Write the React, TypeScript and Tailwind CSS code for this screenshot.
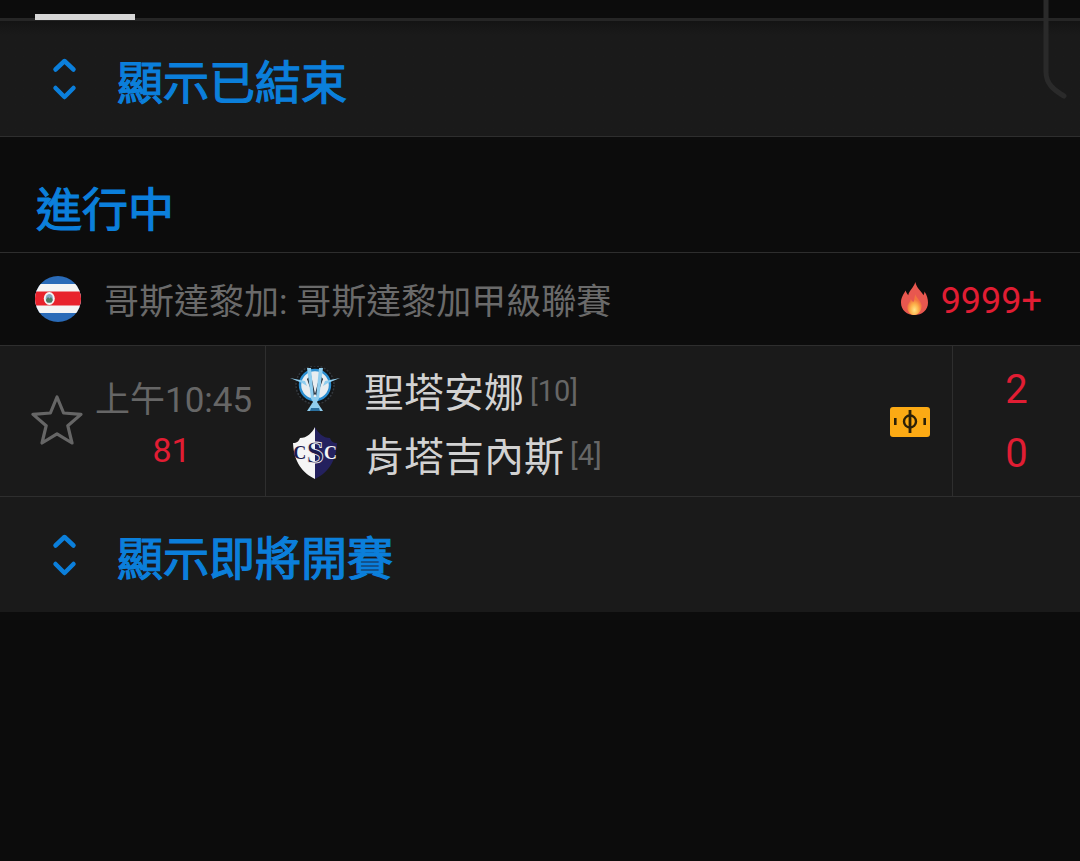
import React from "react";

const sans = "font-['Roboto','Noto_Sans_CJK_TC',sans-serif]";

function ToggleIcon() {
  return (
    <svg width="28" height="46" viewBox="0 0 28 46" fill="none" className="shrink-0">
      <path d="M4.5 13.5 L13.5 5 L22.5 13.5" stroke="#0b7fdb" strokeWidth="4.5" strokeLinecap="round" strokeLinejoin="round" />
      <path d="M4.5 32 L13.5 41 L22.5 32" stroke="#0b7fdb" strokeWidth="4.5" strokeLinecap="round" strokeLinejoin="round" />
    </svg>
  );
}

function ToggleRow({ label, shaded }: { label: string; shaded?: boolean }) {
  return (
    <div className={`flex h-[115px] items-center pl-[51px] ${shaded ? "bg-gradient-to-b from-[#141414] to-[#1a1a1a] to-[12%]" : "bg-[#1a1a1a]"}`}>
      <ToggleIcon />
      <span className="ml-[38px] pt-[8px] text-[46px] leading-none text-[#0b7fdb] [-webkit-text-stroke:1.2px_#0b7fdb]">{label}</span>
    </div>
  );
}

function Flag() {
  return (
    <svg width="46" height="46" viewBox="0 0 46 46" className="shrink-0">
      <defs>
        <clipPath id="flag-clip">
          <circle cx="23" cy="23" r="23" />
        </clipPath>
      </defs>
      <g clipPath="url(#flag-clip)">
        <rect width="46" height="46" fill="#2a6bb8" />
        <rect y="8" width="46" height="29" fill="#f4f4f4" />
        <rect y="15.5" width="46" height="14" fill="#e8222c" />
      </g>
      <ellipse cx="14.3" cy="22.5" rx="5.5" ry="6.5" fill="#f4f4f4" />
      <ellipse cx="14.3" cy="22.5" rx="3.6" ry="4.6" fill="#86a9c4" />
      <path d="M10.8 24 L13 21 L14.5 22.5 L16 21 L17.8 24 L16.6 26.5 L12 26.5 Z" fill="#4d7a62" />
    </svg>
  );
}

function Flame() {
  return (
    <svg width="27" height="34" viewBox="0 0 30 36" preserveAspectRatio="none" className="shrink-0">
      <defs>
        <radialGradient id="flame-in" cx="50%" cy="75%" r="50%">
          <stop offset="0%" stopColor="#ffe58a" />
          <stop offset="55%" stopColor="#fdb24a" />
          <stop offset="100%" stopColor="#f2753f" />
        </radialGradient>
      </defs>
      <path d="M16 0 C17 6 22 9 25 14 C26 12 26 11 26 10 C29 14 30 18 30 22 C30 30 23 35 15 35 C7 35 0 30 0 22 C0 16 3 13 5 9 C6 11 7 13 8 14 C9 9 14 6 16 0 Z" fill="#e8574f" />
      <path d="M16 13 C17 17 22 20 23 25 C23 31 19 35 15 35 C10 35 7 31 7 27 C7 23 10 22 11 18 C12 20 13 21 14 21 C15 18 15 16 16 13 Z" fill="url(#flame-in)" />
    </svg>
  );
}

function Star() {
  return (
    <svg width="52" height="52" viewBox="0 0 52 52" fill="none" className="mb-[2px] shrink-0">
      <path d="M26 3 L32.6 19 L50 20.4 L36.8 31.7 L41 49 L26 39.8 L11 49 L15.2 31.7 L2 20.4 L19.4 19 Z" stroke="#666666" strokeWidth="3.2" strokeLinejoin="round" />
    </svg>
  );
}

function SantaAnaLogo() {
  return (
    <svg width="50" height="46" viewBox="0 0 50 46" className="shrink-0">
      <circle cx="25" cy="19" r="19" fill="#121416" stroke="#34383d" strokeWidth="1.5" strokeDasharray="2 1.5" />
      <circle cx="25" cy="19" r="15" fill="#e8edf0" stroke="#2b8ed0" strokeWidth="2.4" />
      <path d="M0 12 L15 15 L17 20 L12 17 Z M50 12 L35 15 L33 20 L38 17 Z" fill="#8fcdee" />
      <path d="M21 9 L25 28 L23 30 L17 13 Z M30 9 L33 13 L27 30 L25 28 Z" fill="#1b2430" />
      <path d="M17 2 L21 2 L24 32 L21 32 Z M29 2 L33 2 L29 32 L26 32 Z" fill="#8fcdee" />
      <path d="M20 31 L30 31 L27 36 L23 36 Z" fill="#8fcdee" />
      <path d="M23 36 L27 36 L33 45 L17 45 Z" fill="#8fcdee" />
      <path d="M21 42 L29 42 L30 45 L20 45 Z" fill="#2a6f9e" />
    </svg>
  );
}

function CscLogo() {
  return (
    <svg width="44" height="52" viewBox="0 0 44 52" className="shrink-0">
      <path d="M22 0 L22 52 C10 46 1 36 0 16 C4 16 6 14 7 11 C14 11 19 6 22 0 Z" fill="#f5f5f5" />
      <path d="M22 0 C25 6 30 11 37 11 C38 14 40 16 44 16 C43 36 34 46 22 52 Z" fill="#24215e" />
      <text x="0.2" y="32" fontWeight="700" fontFamily="'Liberation Serif', serif">
        <tspan fontSize="18" fill="#1d1b4f">C</tspan>
        <tspan dy="4" fontSize="32" fill="#1d1b4f" stroke="#f5f5f5" strokeWidth="0.8">S</tspan>
        <tspan dy="-4" fontSize="18" fill="#f5f5f5">C</tspan>
      </text>
    </svg>
  );
}

function FieldBadge() {
  return (
    <svg width="40" height="30" viewBox="0 0 40 30" className="shrink-0">
      <rect width="40" height="30" rx="3" fill="#fcaa14" />
      <circle cx="20" cy="14.5" r="6" fill="none" stroke="#2c2007" strokeWidth="2.4" />
      <rect x="18.6" y="3" width="2.8" height="23" fill="#2c2007" />
      <rect x="4" y="11" width="2.6" height="7" fill="#2c2007" />
      <rect x="33.4" y="11" width="2.6" height="7" fill="#2c2007" />
    </svg>
  );
}

function TeamRow({ logo, name, rank }: { logo: React.ReactNode; name: string; rank: string }) {
  return (
    <div className="flex h-[64px] items-center">
      <div className="flex w-[50px] shrink-0 justify-center">{logo}</div>
      <span className="ml-[24px] pt-[10px] text-[40px] leading-none text-[#d2d2d2]">{name}</span>
      <span className="ml-[6px] pt-[4px] text-[29px] leading-none text-[#666666]">{rank}</span>
    </div>
  );
}

export default function App() {
  return (
    <div className={`${sans} relative h-[861px] w-[1080px] overflow-hidden bg-[#0c0c0c]`}>
      {/* Tab bar tail */}
      <div className="h-[14px] bg-[#0c0c0c]" />
      <div className="relative h-[7px] border-b-[3px] border-[#262626]">
        <div className="absolute top-0 left-[35px] h-[6px] w-[100px] bg-[#d6d6d6]" />
      </div>

      <ToggleRow label="顯示已結束" shaded />
      <div className="h-px bg-[#2e2e2e]" />

      <div className="flex h-[115px] items-center pl-[36px]">
        <span className="mt-[30px] text-[46px] leading-none text-[#0b7fdb] [-webkit-text-stroke:1.2px_#0b7fdb]">進行中</span>
      </div>

      {/* League row */}
      <div className="flex h-[94px] items-center border-y border-[#2e2e2e] pl-[35px]">
        <Flag />
        <span className="ml-[23px] pt-[6px] text-[35px] leading-none text-[#6a6a6a]">哥斯達黎加: 哥斯達黎加甲級聯賽</span>
        <div className="mr-[38px] ml-auto flex items-center">
          <Flame />
          <span className="ml-[13px] pt-[4px] text-[36px] leading-none text-[#e11d33]">9999+</span>
        </div>
      </div>

      {/* Match row */}
      <div className="flex h-[150px] bg-[#1a1a1a]">
        <div className="flex w-[266px] shrink-0 items-center border-r border-[#2e2e2e] pl-[31px]">
          <Star />
          <div className="mt-[6px] ml-[12px] flex flex-col items-center">
            <span className="pt-[2px] text-[35px] leading-[50px] whitespace-nowrap text-[#666666]">上午10:45</span>
            <span className="pr-[4px] text-[34px] leading-[48px] text-[#e11d33]">81</span>
          </div>
        </div>
        <div className="flex flex-1 items-center pl-[24px]">
          <div className="flex flex-col">
            <TeamRow logo={<SantaAnaLogo />} name="聖塔安娜" rank="[10]" />
            <TeamRow logo={<CscLogo />} name="肯塔吉內斯" rank="[4]" />
          </div>
          <div className="mt-[2px] mr-[22px] ml-auto">
            <FieldBadge />
          </div>
        </div>
        <div className="flex w-[128px] shrink-0 flex-col items-center justify-center border-l border-[#2e2e2e] pt-[2px] text-[40px] leading-[64px] text-[#e11d33]">
          <span>2</span>
          <span>0</span>
        </div>
      </div>

      <div className="h-px bg-[#2e2e2e]" />
      <ToggleRow label="顯示即將開賽" />

      {/* Pull indicator overlay */}
      <svg width="30" height="100" viewBox="0 0 30 100" fill="none" className="absolute top-0 left-[1040px]">
        <path d="M6 0 L6 72 C6 84 14 90 24 96" stroke="#2a2a2a" strokeWidth="5" strokeLinecap="round" />
      </svg>
    </div>
  );
}
